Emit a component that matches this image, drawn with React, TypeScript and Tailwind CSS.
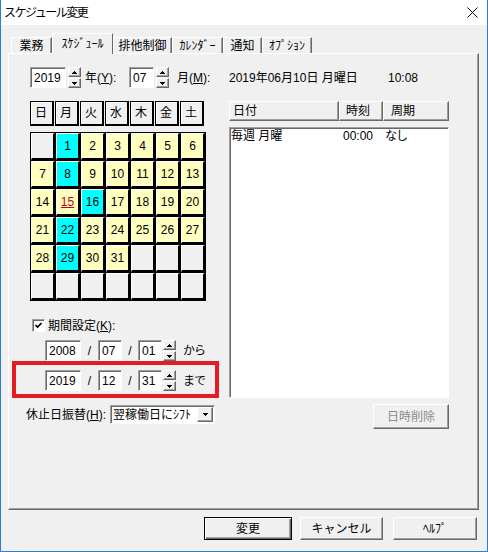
import React from "react"

const raised =
  "border border-t-white border-l-white border-r-[#696969] border-b-[#696969] shadow-[inset_-1px_-1px_0_#a0a0a0]"
const sunken =
  "border border-t-[#a0a0a0] border-l-[#a0a0a0] border-r-white border-b-white shadow-[inset_1px_1px_0_#696969]"

const weeks = [
  [0, 1, 2, 3, 4, 5, 6],
  [7, 8, 9, 10, 11, 12, 13],
  [14, 15, 16, 17, 18, 19, 20],
  [21, 22, 23, 24, 25, 26, 27],
  [28, 29, 30, 31, 0, 0, 0],
  [0, 0, 0, 0, 0, 0, 0],
]
const cyanDays = [1, 8, 16, 22, 29]
const dayNames = ["日", "月", "火", "水", "木", "金", "土"]

const tabs = [
  { label: "業務", w: "w-[41px]" },
  { label: "ｽｹｼﾞｭｰﾙ", w: "w-[61px]", active: true },
  { label: "排他制御", w: "w-[59px]" },
  { label: "ｶﾚﾝﾀﾞｰ", w: "w-[51px]" },
  { label: "通知", w: "w-[39px]" },
  { label: "ｵﾌﾟｼｮﾝ", w: "w-[50px]" },
]

function Tri({ up }: { up?: boolean }) {
  return (
    <svg width="5" height="3" viewBox="0 0 5 3" shapeRendering="crispEdges">
      {up ? (
        <>
          <rect x="2" y="0" width="1" height="1" />
          <rect x="1" y="1" width="3" height="1" />
          <rect x="0" y="2" width="5" height="1" />
        </>
      ) : (
        <>
          <rect x="0" y="0" width="5" height="1" />
          <rect x="1" y="1" width="3" height="1" />
          <rect x="2" y="2" width="1" height="1" />
        </>
      )}
    </svg>
  )
}

function Spin() {
  return (
    <div className="flex h-[21px] w-[13px] flex-col">
      <div className={`${raised} flex h-[10px] items-center justify-center bg-[#f0f0f0]`}>
        <Tri up />
      </div>
      <div className={`${raised} mt-[1px] flex h-[10px] items-center justify-center bg-[#f0f0f0]`}>
        <Tri />
      </div>
    </div>
  )
}

function Field({ value, w }: { value: string; w: string }) {
  return (
    <div className={`${sunken} flex h-[21px] ${w} items-center bg-white pl-[3px] leading-none`}>
      {value}
    </div>
  )
}

function DateRow({ y, m, d, tail }: { y: string; m: string; d: string; tail: string }) {
  return (
    <div className="flex h-[21px] items-center pl-[15px]">
      <Field value={y} w="w-[36px]" />
      <span className="w-[17px] text-center">/</span>
      <Field value={m} w="w-[24px]" />
      <span className="w-[16px] text-center">/</span>
      <Field value={d} w="w-[24px]" />
      <div className="ml-[1px]">
        <Spin />
      </div>
      <span className="ml-[7px] tracking-[-1px]">{tail}</span>
    </div>
  )
}

export default function App() {
  return (
    <div className="relative flex h-[552px] w-[488px] flex-col whitespace-nowrap border-x border-b border-[#2b7fd3] bg-[#f0f0f0] font-['Liberation_Sans','Noto_Sans_CJK_JP',sans-serif] text-[12px] leading-[14px] text-black">
      {/* title bar */}
      <div className="flex h-[25px] items-center justify-between bg-white pl-[3px] pr-[9px]">
        <span className="tracking-[-1.5px]">スケジュール変更</span>
        <svg width="11" height="11" viewBox="0 0 11 11">
          <path d="M0.5 0.5 L10.5 10.5 M10.5 0.5 L0.5 10.5" stroke="#000" strokeWidth="1" />
        </svg>
      </div>

      {/* tabs */}
      <div className="mt-[8px] flex h-[20px] items-end pl-[10px]">
        {tabs.map((t) =>
          t.active ? (
            <div
              key={t.label}
              className={`relative z-10 -mb-[1px] flex h-[21px] ${t.w} items-start justify-center border-l border-t border-r border-l-white border-t-white border-r-[#696969] bg-[#f0f0f0] pt-[3px]`}
            >
              {t.label}
            </div>
          ) : (
            <div
              key={t.label}
              className={`flex h-[16px] ${t.w} items-center justify-center border-l border-t border-r border-l-white border-t-white border-r-[#696969] shadow-[inset_-1px_0_0_#a0a0a0]`}
            >
              {t.label}
            </div>
          )
        )}
      </div>

      {/* tab panel */}
      <div className="ml-[7px] h-[457px] w-[471px] border border-t-white border-l-white border-r-[#696969] border-b-[#696969] pl-[21px] pt-[13px] shadow-[inset_-1px_-1px_0_#a0a0a0]">
        <div className="flex h-[21px] items-center">
          <Field value="2019" w="w-[36px]" />
          <div className="ml-[2px]">
            <Spin />
          </div>
          <span className="ml-[4px] w-[44px]">
            年(<u>Y</u>):
          </span>
          <Field value="07" w="w-[25px]" />
          <div className="ml-[2px]">
            <Spin />
          </div>
          <span className="ml-[8px] w-[52px]">
            月(<u>M</u>):
          </span>
          <span className="w-[159px]">2019年06月10日 月曜日</span>
          <span>10:08</span>
        </div>

        <div className="mt-[13px] flex">
          {/* left column */}
          <div className="flex w-[199px] flex-col">
            <div className="flex gap-[1px]">
              {dayNames.map((d) => (
                <div
                  key={d}
                  className="flex h-[25px] w-[24px] items-center border border-r-2 border-b-2 border-black bg-[#f0f0f0] pl-[4px] shadow-[inset_1px_1px_0_#fff]"
                >
                  {d}
                </div>
              ))}
            </div>

            <div className="mt-[6px] grid w-[176px] grid-cols-[repeat(7,24px)] gap-[1px] bg-black p-[1px]">
              {weeks.flat().map((n, i) => {
                const bg = n === 0 ? "bg-[#f0f0f0]" : cyanDays.includes(n) ? "bg-[#00ffff]" : "bg-[#ffffc0]"
                return (
                  <div
                    key={i}
                    className={`flex h-[27px] items-center justify-center border-l border-t border-r-2 border-b-2 border-l-white border-t-white border-r-black border-b-black ${bg}`}
                  >
                    {n === 15 ? (
                      <span className="text-[#d00000] underline">15</span>
                    ) : n > 0 ? (
                      n
                    ) : null}
                  </div>
                )
              })}
            </div>

            <div className="ml-[2px] mt-[18px] flex h-[13px] items-center gap-[3px]">
              <div className={`${sunken} flex h-[13px] w-[13px] items-center justify-center bg-white`}>
                <svg width="7" height="7" viewBox="0 0 7 7">
                  <path d="M0.5 3 L2.5 5 L6.5 1" stroke="#000" strokeWidth="1.6" fill="none" />
                </svg>
              </div>
              <span>
                期間設定(<u>K</u>):
              </span>
            </div>

            <div className="mt-[8px]">
              <DateRow y="2008" m="07" d="01" tail="から" />
            </div>
            <div className="mt-[9px]">
              <DateRow y="2019" m="12" d="31" tail="まで" />
            </div>

            <div className="-ml-[4px] mt-[14px] flex h-[19px] items-center">
              <span className="w-[84px]">
                休止日振替(<u>H</u>):
              </span>
              <div className={`${sunken} flex h-[19px] w-[105px] items-center justify-between bg-white pl-[2px] pr-[1px]`}>
                <span>翌稼働日にｼﾌﾄ</span>
                <div className={`${raised} flex h-[15px] w-[16px] items-center justify-center bg-[#f0f0f0]`}>
                  <Tri />
                </div>
              </div>
            </div>
          </div>

          {/* right column */}
          <div className="flex w-[220px] flex-col">
            <div className="flex h-[20px]">
              <div className={`${raised} flex w-[110px] items-center bg-[#f0f0f0] pl-[3px]`}>日付</div>
              <div className={`${raised} flex w-[44px] items-center bg-[#f0f0f0] pl-[6px]`}>時刻</div>
              <div className={`${raised} flex w-[66px] items-center bg-[#f0f0f0] pl-[7px]`}>周期</div>
            </div>
            <div className={`${sunken} mt-[6px] h-[271px] bg-white pl-[1px] pt-[1px]`}>
              <div className="flex h-[14px] items-center">
                <span className="w-[112px]">毎週 月曜</span>
                <span className="w-[42px]">00:00</span>
                <span className="tracking-[-1px]">なし</span>
              </div>
            </div>
            <div
              className={`${raised} mt-[6px] flex h-[25px] w-[76px] items-center justify-center self-end bg-[#f0f0f0] text-[#8d8d8d]`}
            >
              日時削除
            </div>
          </div>
        </div>
      </div>

      {/* dialog buttons */}
      <div className="mt-[7px] flex justify-end gap-[8px] pr-[10px]">
        <div className="flex h-[23px] w-[88px] items-center justify-center border border-black shadow-[inset_1px_1px_0_#fff,inset_-1px_-1px_0_#696969,inset_-2px_-2px_0_#a0a0a0]">
          変更
        </div>
        <div className={`${raised} flex h-[23px] w-[83px] items-center justify-center`}>キャンセル</div>
        <div className={`${raised} ml-[2px] flex h-[23px] w-[84px] items-center justify-center`}>ﾍﾙﾌﾟ</div>
      </div>

      {/* red highlight annotation */}
      <div className="absolute left-[11px] top-[361px] h-[37px] w-[207px] border-4 border-[#e51b23]" />
    </div>
  )
}
